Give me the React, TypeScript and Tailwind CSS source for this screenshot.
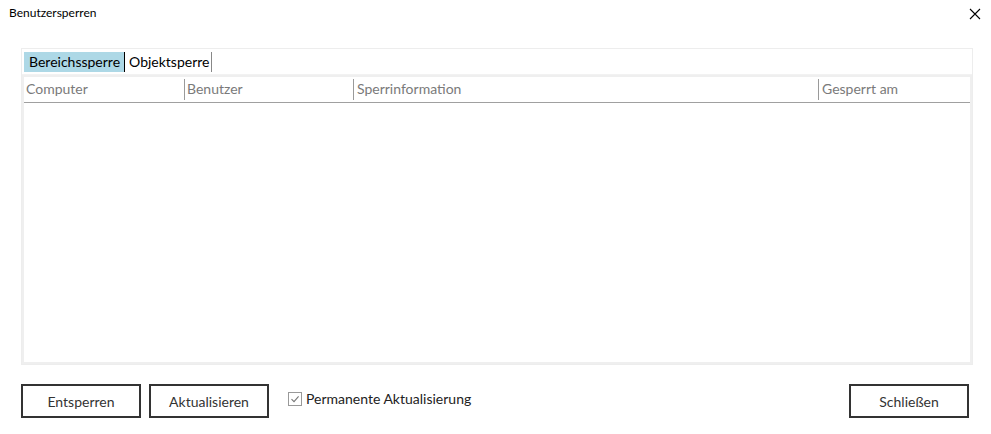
import React from "react";

export default function App() {
  const font = { fontFamily: "Lato, 'Noto Sans', sans-serif" };
  return (
    <div className="w-[991px] h-[434px] bg-white flex flex-col text-[#222]" style={font}>
      {/* title bar */}
      <div className="h-[27px] flex items-center justify-between pl-[9px] pr-[6px] pb-[1px]">
        <span className="text-[12px] text-black">Benutzersperren</span>
        <svg width="12" height="12" viewBox="0 0 12 12" className="mr-[4px] mt-[1px]">
          <path d="M1 1 L11 11 M11 1 L1 11" stroke="#000" strokeWidth="1.1" />
        </svg>
      </div>

      {/* panel */}
      <div className="ml-[21px] mt-[21px] w-[952px] h-[317px] border border-[#ededed] flex flex-col">
        {/* tab strip */}
        <div className="h-[26px] flex items-start pl-[2px] pt-[3px] border-b border-[#f2f2f2]">
          <div className="h-[20px] flex items-center bg-[#add8e6] pl-[5px] pr-[4px] text-[14px] text-black border-r border-black leading-none">
            Bereichssperre
          </div>
          <div className="h-[20px] flex items-center pl-[4px] pr-[2px] text-[14px] text-black border-r border-[#888] leading-none">
            Objektsperre
          </div>
        </div>

        {/* table */}
        <div className="flex-1 border-2 border-[#efefef] flex flex-col">
          <div className="h-[26px] flex items-start pt-[2px] border-b border-[#a0a0a0] text-[14px] text-[#7a7a7a] leading-none">
            <div className="w-[160px] pl-[2px] h-[21px] flex items-center pb-[2px]">Computer</div>
            <div className="w-[169px] pl-[2px] h-[21px] flex items-center pb-[2px] border-l border-[#9a9a9a]">Benutzer</div>
            <div className="w-[465px] pl-[3px] h-[21px] flex items-center pb-[2px] border-l border-[#9a9a9a]">Sperrinformation</div>
            <div className="flex-1 pl-[3px] h-[21px] flex items-center pb-[2px] border-l border-[#9a9a9a]">Gesperrt am</div>
          </div>
          <div className="flex-1" />
        </div>
      </div>

      {/* button row */}
      <div className="mt-[19px] ml-[21px] flex items-center">
        <button className="w-[120px] h-[34px] border-2 border-[#333] text-[14px] text-[#333] bg-white">Entsperren</button>
        <button className="ml-[8px] w-[120px] h-[34px] border-2 border-[#333] text-[14px] text-[#333] bg-white">Aktualisieren</button>
        <div className="ml-[19px] flex items-center -mt-[5px]">
          <div className="w-[14px] h-[14px] border border-[#999] bg-white flex items-center justify-center">
            <svg width="10" height="10" viewBox="0 0 10 10">
              <path d="M1.5 5.2 L4 7.6 L8.6 2.4" stroke="#777" strokeWidth="1.1" fill="none" />
            </svg>
          </div>
          <span className="ml-[4px] text-[14px] text-[#222]">Permanente Aktualisierung</span>
        </div>
        <div className="flex-1" />
        <button className="mr-[22px] w-[120px] h-[34px] border-2 border-[#333] text-[14px] text-[#333] bg-white">Schließen</button>
      </div>
    </div>
  );
}
